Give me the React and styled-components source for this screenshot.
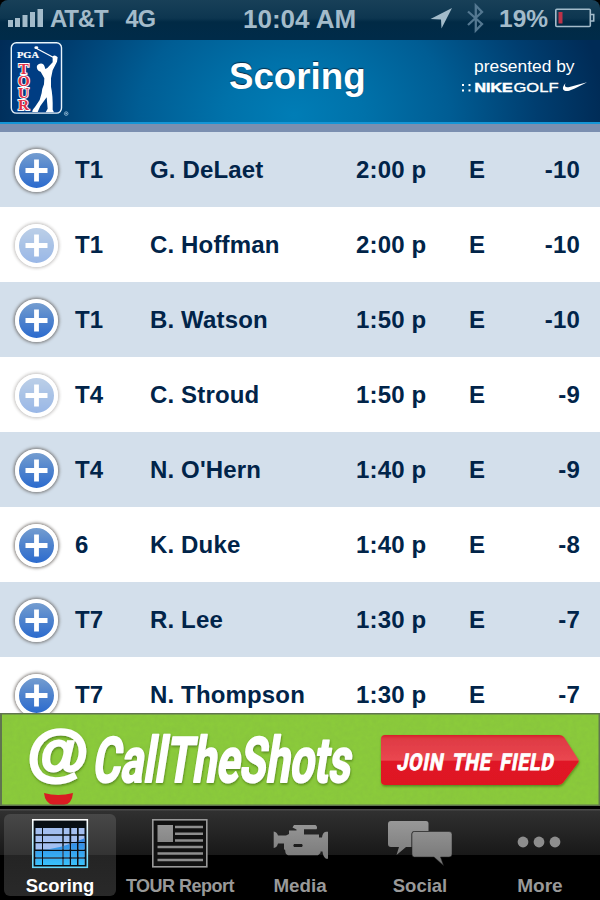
import React from "react";
import styled, { createGlobalStyle } from "styled-components";

const GlobalStyle = createGlobalStyle`
  * { box-sizing: border-box; }
  body { margin: 0; background: #000; }
`;

const Screen = styled.div`
  width: 600px;
  height: 900px;
  display: flex;
  flex-direction: column;
  overflow: hidden;
  background: #000;
  font-family: "Liberation Sans", Arial, sans-serif;
`;

const StatusBar = styled.header`
  flex: none;
  height: 40px;
  display: grid;
  grid-template-columns: 243px 187px 170px;
  border-radius: 8px 8px 0 0;
  background: linear-gradient(#184058, #0d3650 45%, #012a45 55%, #002b49);
  color: #a3bbca;
  font-weight: 700;
`;

const StatusGroup = styled.div`
  display: flex;
  align-items: flex-start;
`;

const StatusText = styled.span`
  font-size: ${(p) => p.$size}px;
  line-height: 28px;
  padding-top: 5px;
  margin-left: ${(p) => p.$gap || 0}px;
  letter-spacing: ${(p) => p.$track || 0}px;
  white-space: nowrap;
`;

const Drawing = styled.svg`
  display: block;
  flex: none;
`;

const TitleBar = styled.div`
  flex: none;
  height: 84px;
  display: grid;
  grid-template-columns: 80px 1fr 150px;
  border-bottom: 2px solid #1495d6;
  background: radial-gradient(ellipse 310px 240px at 49% 92%, #007db6 0%, #0072aa 22%, #005d94 50%, #003e70 78%, #002b56 100%);
`;

const Title = styled.h1`
  margin: 0;
  padding: 16px 0 0 149px;
  color: #fff;
  font-size: 36.7px;
  line-height: 42px;
  text-shadow: 0 -1.5px 1px #06304d;
`;

const Sponsor = styled.div`
  color: #fff;
  padding-top: 16px;
`;

const SponsorLine = styled.div`
  font-size: 17.4px;
  line-height: 20px;
  padding-left: 24px;
  white-space: nowrap;
`;

const List = styled.main`
  flex: none;
  height: 589px;
  overflow: hidden;
  border-top: 8px solid #7b8fb0;
`;

const Row = styled.div`
  height: 75px;
  display: grid;
  grid-template-columns: 75px 75px 206px 113px 51px 60px;
  align-items: center;
  background: ${(p) => (p.$tint ? "#d3dfeb" : "#fff")};
  color: #012449;
  font-size: 24px;
  font-weight: 700;
  letter-spacing: 0.15px;
  white-space: nowrap;
`;

const Score = styled.span`
  text-align: right;
`;

const AddButton = styled.button`
  width: 43px;
  height: 43px;
  margin: 1px 0 0 15px;
  padding: 0;
  border: 4px solid #fff;
  border-radius: 50%;
  background: linear-gradient(#749dd0, #4f83cd 48%, #2c6bce);
  box-shadow: 0 0 3px 1.5px rgba(90, 85, 80, 0.65);
  opacity: ${(p) => (p.$faded ? 0.48 : 1)};
`;

const Banner = styled.section`
  flex: none;
  height: 93px;
  background: #8bc83c;
`;

const TabBar = styled.nav`
  flex: none;
  height: 94px;
  display: grid;
  grid-template-columns: repeat(5, 120px);
  border-top: 3px solid #000;
  background: linear-gradient(#4b4b4b 0 1px, #303030 2px, #181818 46px, #000 46px);
`;

const Tab = styled.div`
  display: flex;
  flex-direction: column;
  align-items: center;
  margin: 5px 4px 4px;
  height: 82px;
  border-radius: 6px;
  background: ${(p) => (p.$active ? "linear-gradient(#484848, #333 41px, #242424 41px, #292929)" : "none")};
  color: ${(p) => (p.$active ? "#fff" : "#999")};
`;

const TabLabel = styled.span`
  font-size: ${(p) => p.$size}px;
  font-weight: 700;
  line-height: 22px;
  margin-top: 4px;
  letter-spacing: ${(p) => p.$track || 0}px;
  white-space: nowrap;
`;

const UprightText = styled.text`
  writing-mode: vertical-rl;
  text-orientation: upright;
  letter-spacing: -5px;
`;

const players = [
  ["T1", "G. DeLaet", "2:00 p", "E", "-10", false],
  ["T1", "C. Hoffman", "2:00 p", "E", "-10", true],
  ["T1", "B. Watson", "1:50 p", "E", "-10", false],
  ["T4", "C. Stroud", "1:50 p", "E", "-9", true],
  ["T4", "N. O'Hern", "1:40 p", "E", "-9", false],
  ["6", "K. Duke", "1:40 p", "E", "-8", false],
  ["T7", "R. Lee", "1:30 p", "E", "-7", false],
  ["T7", "N. Thompson", "1:30 p", "E", "-7", false],
];

const Signal = () => (
  <Drawing width="50" height="40" fill="#a3bbca">
    <rect x="8" y="20" width="5" height="7" />
    <rect x="15" y="18" width="5" height="9" />
    <rect x="22.5" y="15" width="5" height="12" />
    <rect x="30" y="12" width="5" height="15" />
    <rect x="37.5" y="9" width="5.5" height="18" />
  </Drawing>
);

const StatusIcons = () => (
  <Drawing width="69" height="40" viewBox="430 0 69 40">
    <path d="M452 8 L430.5 19 L441 19.5 L441.5 28.5 Z" fill="#a3bbca" />
    <path d="M468 11.5 L482 24 L475.8 30.5 V5.5 L482 12 L468 25" fill="none" stroke="#547891" strokeWidth="2.3" />
  </Drawing>
);

const Battery = () => (
  <Drawing width="46" height="40" viewBox="548 0 46 40">
    <rect x="549.8" y="9.2" width="34.5" height="17.3" rx="1" fill="none" stroke="#a3bbca" strokeWidth="1.6" />
    <path d="M585 14.5 H587.7 V21 H585" fill="none" stroke="#a3bbca" strokeWidth="1.6" />
    <rect x="552.5" y="12" width="4" height="11.5" fill="#bb3248" />
  </Drawing>
);

const BatterySlot = styled.span`
  margin-left: 6px;
  width: 46px;
  overflow: hidden;
`;

const TourLogo = () => (
  <Drawing width="80" height="82" viewBox="0 40 80 82">
    <rect x="11.3" y="42.7" width="50.2" height="70.4" rx="5" fill="#003d83" stroke="#e8f4fb" strokeWidth="1.4" />
    <g fontFamily="Liberation Serif, serif" fontWeight="700">
      <text x="17" y="58" fontSize="9.2" fill="#fff" stroke="#fff" strokeWidth=".2" textLength="22" lengthAdjust="spacingAndGlyphs">PGA</text>
      <UprightText x="23.7" y="59.5" fontSize="15.5" fill="#df3047" stroke="#fff" strokeWidth="1.8" paintOrder="stroke">TOUR</UprightText>
    </g>
    <g transform="scale(.3333)" fill="#fff">
      <ellipse cx="109" cy="143" rx="6" ry="4" />
      <path d="M107 144 L162 173" stroke="#fff" strokeWidth="3.6" />
      <path d="M111 205 Q108 194 119 191 Q130 188 134 200 L136 207 L142 204 L158 187 L158 169 Q165 163 173 172 L171 185 L158 211 L153 235 L153 260 Q159 286 158 329 L162 337 L137 337 L143 326 L140 292 L121 318 L113 336 L97 336 Q96 330 105 321 L119 300 L125 279 Q126 266 132 253 L133 235 L122 215 Q113 214 111 205 Z" />
    </g>
    <circle cx="66.2" cy="113.6" r="1.8" fill="none" stroke="#9cc1d9" strokeWidth=".8" />
    <circle cx="66.2" cy="113.6" r=".8" fill="#9cc1d9" />
  </Drawing>
);

const NikeGolf = () => (
  <Drawing width="150" height="24" viewBox="450 76 150 24" fill="#fff">
    {[462, 468.5].map((x) => (
      <g key={x}>
        <rect x={x} y="84" width="2" height="2" />
        <rect x={x} y="89.5" width="2" height="2" />
      </g>
    ))}
    <text x="474.5" y="91.8" fontSize="12.4" fontWeight="700" stroke="#fff" strokeWidth=".5" textLength="38" lengthAdjust="spacingAndGlyphs">NIKE</text>
    <text x="513.5" y="91.8" fontSize="12.4" stroke="#fff" strokeWidth=".35" textLength="45" lengthAdjust="spacingAndGlyphs">GOLF</text>
    <path d="M565.5 83.2 C561.5 87.5 562 91.3 568 91 C571 90.5 578 86.8 587 82.2 L569.5 87 C565.5 88 564 86.5 565.5 83.2 Z" />
  </Drawing>
);

const Plus = () => (
  <Drawing width="35" height="35" viewBox="0 0 35 35">
    <path d="M17.5 6.5 V28.5 M6.5 17.5 H28.5" stroke="#fff" strokeWidth="4.8" />
  </Drawing>
);

const BannerArt = () => (
  <Drawing width="600" height="93" viewBox="0 713 600 93">
    <defs>
      <filter id="grass" x="0" y="0" width="100%" height="100%">
        <feTurbulence type="fractalNoise" baseFrequency=".22" numOctaves="3" seed="4" />
        <feColorMatrix values="0 0 0 0 .2  0 0 0 0 .42  0 0 0 0 .06  .8 0 0 0 -.2" />
      </filter>
      <filter id="soft" x="-10%" y="-20%" width="120%" height="150%">
        <feDropShadow dx=".5" dy="1.5" stdDeviation="1.1" floodColor="#406b18" floodOpacity=".7" />
      </filter>
      <linearGradient id="red" x1="0" x2="0" y1="0" y2="1">
        <stop offset="0" stopColor="#d7202c" />
        <stop offset=".08" stopColor="#df3b44" />
        <stop offset=".5" stopColor="#ea4650" />
        <stop offset=".53" stopColor="#e01925" />
        <stop offset="1" stopColor="#df1724" />
      </linearGradient>
    </defs>
    <rect x="0" y="713" width="600" height="93" fill="#8bcb3b" />
    <rect x="0" y="713" width="600" height="93" filter="url(#grass)" opacity=".4" />
    <path d="M44 793 Q58 797 73 793 Q72 804 64 805 H53 Q45 803 44 793 Z" fill="#d91c22" />
    <g fill="#fff" stroke="#fff" filter="url(#soft)">
      <text x="27.5" y="773.3" fontSize="62" fontWeight="700" strokeWidth="3" textLength="61" lengthAdjust="spacingAndGlyphs">@</text>
      <text transform="translate(91.5 781.5) skewX(-9)" fontFamily="Roboto, sans-serif" fontSize="63" fontWeight="700" strokeWidth="1.8" strokeLinejoin="round" textLength="258" lengthAdjust="spacingAndGlyphs">CallTheShots</text>
    </g>
    <path d="M385 735 H559 Q562 735 564 737 L578 759 Q579.5 761 578 763 L563 783 Q561 785 558 785 H385 Q381 785 381 781 V739 Q381 735 385 735 Z" fill="url(#red)" filter="url(#soft)" />
    <text transform="translate(396.5 769.5) skewX(-10)" fill="#fff" stroke="#fff" strokeWidth=".9" fontFamily="Roboto, sans-serif" fontSize="23" fontWeight="700" wordSpacing="4" letterSpacing="1" textLength="157" lengthAdjust="spacingAndGlyphs">JOIN THE FIELD</text>
    <path d="M0 713.7 H600 M599.3 713 V806 M0 805.3 H600" stroke="#60754f" strokeWidth="1.5" />
    <path d="M1 713 V806" stroke="#60754f" strokeWidth="2" />
  </Drawing>
);

const TabIcon = ({ x, children }) => (
  <Drawing width="112" height="57" viewBox={`${x} 814 112 57`}>
    <defs>
      <linearGradient id={`g${x}`} gradientUnits="userSpaceOnUse" x1="0" x2="0" y1="820" y2="866">
        <stop offset="0" stopColor="#999" />
        <stop offset="1" stopColor="#747474" />
      </linearGradient>
    </defs>
    {children}
  </Drawing>
);

const gridColumns = [[35.5, 6.5], [43, 19.3], [63.7, 5.8], [71.2, 5.8], [78.7, 5.8]];
const gridRows = [828, 835.7, 843.3, 851, 858.7];

const ScoringIcon = () => (
  <TabIcon x={4}>
    <defs>
      <linearGradient id="frame" x1="0" x2="0" y1="0" y2="1">
        <stop offset="0" stopColor="#fff" />
        <stop offset="1" stopColor="#65d7fb" />
      </linearGradient>
      <linearGradient id="lower" gradientUnits="userSpaceOnUse" x1="0" x2="0" y1="840" y2="865">
        <stop offset="0" stopColor="#3387e3" />
        <stop offset="1" stopColor="#38c1fb" />
      </linearGradient>
      <clipPath id="cells">
        {gridRows.map((y) => gridColumns.map(([x, w]) => <rect key={`${x}-${y}`} x={x} y={y} width={w} height="6.2" />))}
      </clipPath>
    </defs>
    <rect x="32.8" y="819.8" width="54.5" height="47.5" fill="#080f15" stroke="url(#frame)" strokeWidth="1.6" />
    <g clipPath="url(#cells)">
      <rect x="33" y="820" width="54" height="48" fill="#a3bff0" />
      <path d="M33 851 Q63 849 87 837 V868 H33 Z" fill="url(#lower)" />
    </g>
  </TabIcon>
);

const ReportIcon = () => (
  <TabIcon x={124}>
    <rect x="152.8" y="819.8" width="54" height="47" fill="#111" stroke="#999" strokeWidth="1.6" />
    <rect x="157.5" y="825" width="15.5" height="17" fill="url(#g124)" />
    <path d="M175 827 H203 M175 833.8 H203 M175 840.5 H203 M157.5 847 H203 M157.5 853.5 H203 M157.5 860 H203" stroke="#8e8e8e" strokeWidth="2.4" />
  </TabIcon>
);

const MediaIcon = () => (
  <TabIcon x={244}>
    <path fill="url(#g244)" fillRule="evenodd" d="M273.7 831.5 Q277 832 278 835.5 H286 L289 834 V830.5 H296.5 V829.5 L292.5 827.5 L294 825 H315.5 Q318 827 316.5 829.3 H304 V834.5 H319 V837.5 H322 Q322.5 832.5 326 831.8 H328 V858.7 H326 Q323 857 322.5 851.5 H320.5 V853 L318 855.3 H288 Q285 854 285.3 850.5 L284 849 V843.5 H278 Q277 847.5 273.7 848 Z M294 844 Q292.5 845.5 294 847 H302 Q303.5 845.5 302 844 Z" />
  </TabIcon>
);

const SocialIcon = () => (
  <TabIcon x={364}>
    <path d="M391 821 H426 Q428.5 821 428.5 823.5 V831 H415 Q411.5 831 411.5 834 V847 H406 L396.5 855 L399 847 H391 Q388 847 388 844 V824 Q388 821 391 821 Z" fill="url(#g364)" />
    <path d="M414.5 831.5 H449 Q452 831.5 452 834.5 V854 Q452 857 449 857 H440.5 L443.5 865.5 L434 857 H414.5 Q412 857 412 854 V834 Q412 831.5 414.5 831.5 Z" fill="url(#g364)" stroke="#202020" strokeWidth=".5" />
  </TabIcon>
);

const MoreIcon = () => (
  <TabIcon x={484}>
    {[523, 539, 555].map((x) => <circle key={x} cx={x} cy="842" r="5.4" fill="#8d8d8d" />)}
  </TabIcon>
);

const tabs = [
  ["Scoring", ScoringIcon, 18.4, 0],
  ["TOUR Report", ReportIcon, 18, -0.5],
  ["Media", MediaIcon, 18.8, 0],
  ["Social", SocialIcon, 18.5, 0],
  ["More", MoreIcon, 19, 0],
];

export default function App() {
  return (
    <Screen>
      <GlobalStyle />
      <StatusBar>
        <StatusGroup>
          <Signal />
          <StatusText $size={24} $track={-1.2}>AT&amp;T</StatusText>
          <StatusText $size={23.5} $gap={18} $track={-0.7}>4G</StatusText>
        </StatusGroup>
        <StatusGroup>
          <StatusText $size={26}>10:04 AM</StatusText>
        </StatusGroup>
        <StatusGroup>
          <StatusIcons />
          <StatusText $size={24.5}>19%</StatusText>
          <BatterySlot><Battery /></BatterySlot>
        </StatusGroup>
      </StatusBar>
      <TitleBar>
        <TourLogo />
        <Title>Scoring</Title>
        <Sponsor>
          <SponsorLine>presented by</SponsorLine>
          <NikeGolf />
        </Sponsor>
      </TitleBar>
      <List>
        {players.map(([pos, name, time, today, total, faded], i) => (
          <Row key={name} $tint={i % 2 === 0}>
            <AddButton $faded={faded} aria-label={`Add ${name}`}><Plus /></AddButton>
            <span>{pos}</span>
            <span>{name}</span>
            <span>{time}</span>
            <span>{today}</span>
            <Score>{total}</Score>
          </Row>
        ))}
      </List>
      <Banner><BannerArt /></Banner>
      <TabBar>
        {tabs.map(([label, Icon, size, track], i) => (
          <Tab key={label} $active={i === 0}>
            <Icon />
            <TabLabel $size={size} $track={track}>{label}</TabLabel>
          </Tab>
        ))}
      </TabBar>
    </Screen>
  );
}
